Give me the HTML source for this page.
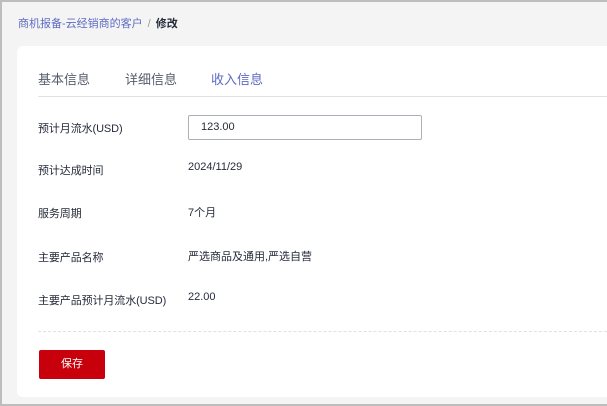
<!DOCTYPE html>
<html><head><meta charset="utf-8"><style>
*{margin:0;padding:0;box-sizing:border-box}
body{width:607px;height:406px;overflow:hidden;font-family:"Liberation Sans","Noto Sans CJK SC",sans-serif;font-size:11px;color:#252b3a}
.frame{position:absolute;left:0;top:0;width:607px;height:406px;border:2px solid #bdbdbd;border-right:none;background:#f4f4f4}
.bc{position:absolute;left:16px;top:13px;font-size:11px;color:#5e6bc2}
.bc b{color:#252b3a;font-weight:bold}
.bc i{font-style:normal;color:#999;margin:0 5px}
.card{position:absolute;left:15px;top:44px;width:600px;height:351px;background:#fff;border-radius:6px}
.tab{position:absolute;top:23px;font-size:13px;color:#575d6c}
.line{position:absolute;left:21px;right:0;top:50px;height:1px;background:#dfe1e6}
.lbl{position:absolute;left:21px;font-size:11px;letter-spacing:-0.1px}
.val{position:absolute;left:171px;font-size:11px}
.inp{position:absolute;left:171px;top:69px;width:234px;height:25px;border:1px solid #adb0b8;border-radius:2px;padding:5px 0 0 12px;font-size:11px}
.dash{position:absolute;left:21px;right:0;top:285px;border-top:1px dashed #dfe1e6}
.btn{position:absolute;left:22px;top:304px;width:66px;height:29px;background:#c7000b;border-radius:2px;color:#fff;text-align:center;line-height:29px;font-size:11px}
</style></head><body>
<div class="frame">
<div class="bc">商机报备-云经销商的客户<i>/</i><b>修改</b></div>
<div class="card">
<div class="tab" style="left:21px">基本信息</div>
<div class="tab" style="left:108px">详细信息</div>
<div class="tab" style="left:194px;color:#5e6bc2">收入信息</div>
<div class="line"></div>
<div class="lbl" style="top:74px">预计月流水(USD)</div>
<div class="inp">123.00</div>
<div class="lbl" style="top:116px">预计达成时间</div><div class="val" style="top:115px">2024/11/29</div>
<div class="lbl" style="top:159px">服务周期</div><div class="val" style="top:158px">7个月</div>
<div class="lbl" style="top:203px">主要产品名称</div><div class="val" style="top:202px">严选商品及通用,严选自营</div>
<div class="lbl" style="top:246px">主要产品预计月流水(USD)</div><div class="val" style="top:245px">22.00</div>
<div class="dash"></div>
<div class="btn">保存</div>
</div>
</div>
</body></html>
